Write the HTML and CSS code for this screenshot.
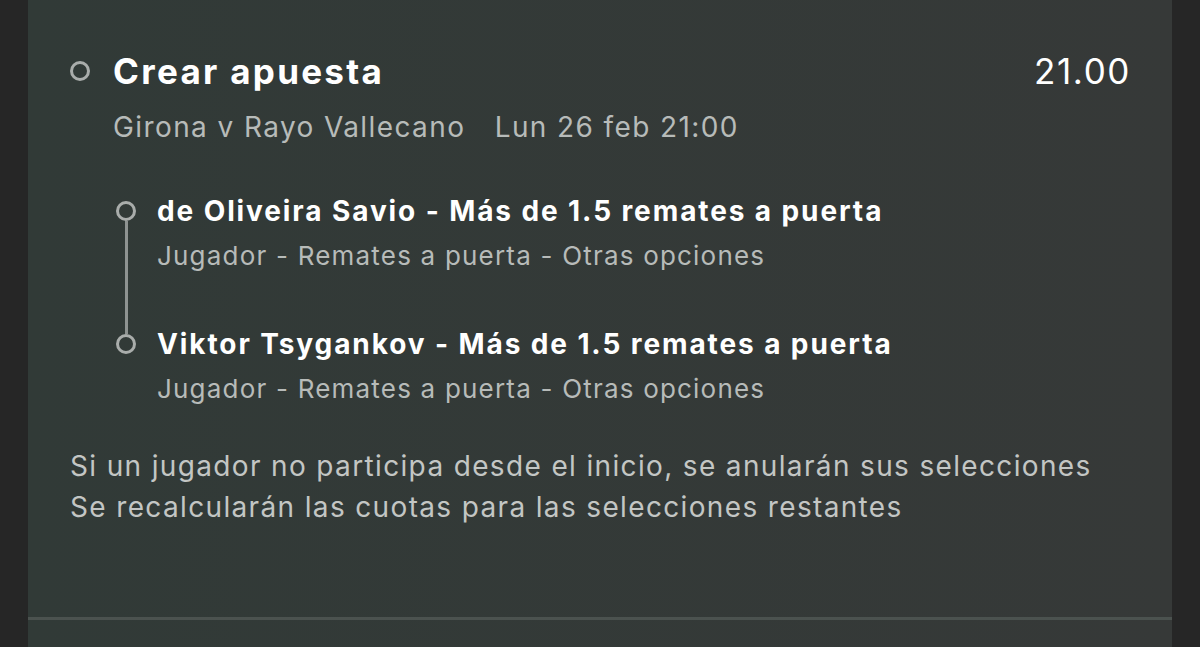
FILE: index.html
```html
<!DOCTYPE html>
<html lang="es">
<head>
    <meta charset="UTF-8">
    <meta name="viewport" content="width=device-width, initial-scale=1.0">
    <title>Crear apuesta</title>
    <link rel="stylesheet" href="styles.css">
</head>
<body>
    <div class="panel">
        <div class="bet">
            <div class="bet-head">
                <span class="ring"></span>
                <h1 class="bet-title">Crear apuesta</h1>
                <span class="odds">21.00</span>
            </div>
            <div class="match">
                <span>Girona v Rayo Vallecano</span>
                <span class="match-date">Lun 26 feb 21:00</span>
            </div>

            <div class="legs">
                <div class="leg">
                    <div class="leg-mark"><span class="ring"></span></div>
                    <div class="leg-body">
                        <div class="leg-title">de Oliveira Savio - Más de 1.5 remates a puerta</div>
                        <div class="leg-sub">Jugador - Remates a puerta - Otras opciones</div>
                    </div>
                </div>
                <div class="leg">
                    <div class="leg-mark"><span class="ring"></span></div>
                    <div class="leg-body">
                        <div class="leg-title">Viktor Tsygankov - Más de 1.5 remates a puerta</div>
                        <div class="leg-sub">Jugador - Remates a puerta - Otras opciones</div>
                    </div>
                </div>
            </div>

            <div class="note">
                <p>Si un jugador no participa desde el inicio, se anularán sus selecciones</p>
                <p>Se recalcularán las cuotas para las selecciones restantes</p>
            </div>
        </div>
        <div class="divider"></div>
    </div>
</body>
</html>
```

FILE: styles.css
```css
body {
    margin: 0;
    background: #262626;
    font-family: Inter, "Noto Sans", sans-serif;
    color: #fff;
}
.panel {
    margin: 0 28px;
    height: 647px;
    background: linear-gradient(90deg, #313a37, #363938);
    overflow: hidden;
}
.bet {
    padding: 51px 41px 0 42px;
    height: 566px;
}
.bet-head {
    display: flex;
    align-items: center;
}
.ring {
    display: block;
    width: 20px;
    height: 20px;
    box-sizing: border-box;
    border: 3px solid #a9adab;
    border-radius: 50%;
    flex-shrink: 0;
}
.bet-title {
    margin: 0 0 0 23px;
    font-size: 35px;
    line-height: 40px;
    font-weight: 700;
    letter-spacing: 2.3px;
}
.odds {
    margin-left: auto;
    font-size: 35px;
    line-height: 40px;
    letter-spacing: 1.6px;
}
.match {
    margin: 20px 0 0 43px;
    font-size: 28px;
    line-height: 32px;
    letter-spacing: 1.4px;
    color: #b7bbb9;
}
.match-date {
    margin-left: 20px;
}
.legs {
    margin: 51px 0 0 46px;
}
.leg {
    display: grid;
    grid-template-columns: 20px 1fr;
    column-gap: 21px;
}
.leg-body {
    padding-bottom: 55px;
}
.leg:last-child .leg-body {
    padding-bottom: 0;
}
.leg-mark {
    display: flex;
    flex-direction: column;
    align-items: center;
}
.leg-mark::before,
.leg-mark::after {
    content: '';
    width: 3px;
    background: #8e9391;
}
.leg-mark::before {
    height: 7px;
}
.leg-mark::after {
    flex: 1;
}
.leg:first-child .leg-mark::before,
.leg:last-child .leg-mark::after {
    background: transparent;
}
.leg-title {
    font-size: 28px;
    line-height: 34px;
    font-weight: 700;
    letter-spacing: 1.9px;
}
.leg-sub {
    margin-top: 12px;
    font-size: 26px;
    line-height: 32px;
    letter-spacing: 1.2px;
    color: #b7bbb9;
}
.note {
    margin-top: 41px;
    font-size: 28px;
    line-height: 41px;
    letter-spacing: 1.35px;
    color: #c3c6c4;
}
.note p {
    margin: 0;
}
.divider {
    height: 3px;
    background: #4b524f;
}
```
